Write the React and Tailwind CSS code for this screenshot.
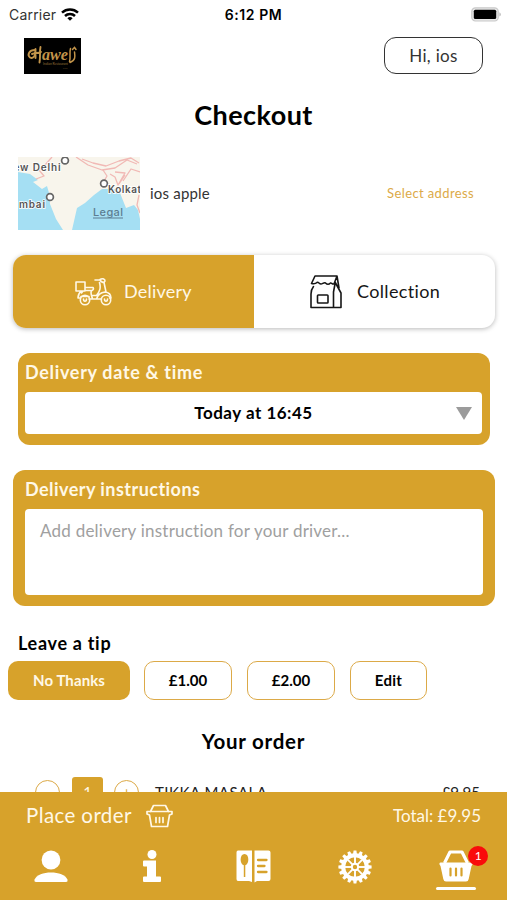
import React from "react";

const TEETH = Array.from({ length: 16 }, (_, i) => i * 22.5);
const SPOKES = Array.from({ length: 8 }, (_, i) => i * 45);

function Wifi() {
  return (
    <svg width="18" height="13" viewBox="0 0 18 13" fill="none" stroke="#000" strokeWidth="2.5">
      <path d="M1 4.6C5.6 .4 12.4 .4 17 4.6" />
      <path d="M4 8C6.8 5.3 11.2 5.3 14 8" />
      <path d="M9 12.8 6.4 10.2C7.8 8.7 10.2 8.7 11.6 10.2Z" fill="#000" stroke="none" />
    </svg>
  );
}

function Battery() {
  return (
    <svg width="31" height="15" viewBox="0 0 31 15">
      <rect x=".8" y=".8" width="26.4" height="13.2" rx="3.6" fill="#e8e8e8" stroke="#c9c9c9" strokeWidth="1.200" />
      <rect x="2.8" y="2.7" width="22.4" height="9.4" rx="1.500" fill="#000" />
      <path d="M28.4 5.2c2 .8 2 3.6 0 4.4z" fill="#bdbdbd" />
    </svg>
  );
}

function Logo() {
  return (
    <svg width="57" height="36" viewBox="0 0 57 36">
      <rect width="57" height="36" fill="#000" />
      <g fill="none" stroke="#c2944a" strokeLinecap="round">
        <path d="M11 12C5 12 3 17 6 19.500C9 21 11.500 18 11 14.500" strokeWidth="1.900" />
        <path d="M11.500 11V20M8 16C12 14.500 14 15.500 17 14M16.500 9C15.500 13 16.500 19 15.500 24.500" strokeWidth="1.900" />
        <path d="M46.500 10.500C45 15 47 20 45.500 23.500M50.500 14C51 18 52 22 46 24.500M48.500 11.500L50.500 9.500L52 11.500" strokeWidth="1.500" />
      </g>
      <text x="18" y="21.500" fill="#c2944a" fontFamily="Liberation Serif, serif" fontStyle="italic" fontWeight="700" fontSize="17" textLength="26" lengthAdjust="spacingAndGlyphs">awe</text>
      <text x="19" y="27" fill="#8f6d35" fontFamily="Lato, sans-serif" fontSize="3.4" textLength="25">Indian Restaurant</text>
      <text x="39" y="30.500" fill="#5c4724" fontFamily="Lato, sans-serif" fontSize="2.5">cafe</text>
    </svg>
  );
}

function MapThumb() {
  return (
    <svg width="122" height="73" viewBox="0 0 122 73">
      <rect width="122" height="73" fill="#f8f5ec" />
      <path d="M0 15L12 17L20 23L15 25L24 32L29 29L31 36L32 47L38 62L45 73H0ZM54 73L59 51L67 46L76 38L84 32H96L102 36L108 51L116 48L120 53L122 62V73Z" fill="#a5dff3" />
      <g fill="none" stroke="#f1b9b5" strokeWidth="1.300" strokeLinejoin="round">
        <path d="M34 0L27 8L21 13L26 19L18 22M58 0L70 8L84 13L97 11L109 3L119 7M64 2L75 6L88 9L101 4L113 1L121 6M85 13L89 19L86 24M97 15L107 16L100 28L97 20L92 17M105 24L113 12L122 15M107 18L101 27M121 38L119 48L122 56" />
      </g>
      <g fill="#fff" stroke="#666" strokeWidth="1.700">
        <circle cx="47" cy="3.500" r="3.400" />
        <circle cx="86" cy="26.500" r="3.400" />
        <circle cx="32" cy="40" r="3.400" />
      </g>
      <g fontFamily="Inter, sans-serif" fontSize="10" fontWeight="600" fill="#555" stroke="#fff" strokeWidth="1.600" paintOrder="stroke">
        <text x="-4.500" y="13.500" textLength="47">ew Delhi</text>
        <text x="90" y="36" textLength="33">Kolkat</text>
        <text x="1" y="50.500" textLength="26">mbai</text>
      </g>
      <text x="75" y="59" fontFamily="Inter, sans-serif" fontSize="11" fontWeight="500" fill="#5c7d92" textLength="30">Legal</text>
      <path d="M75 61H105" stroke="#5c7d92" strokeWidth="1" />
    </svg>
  );
}

function Scooter() {
  return (
    <svg width="37" height="28" viewBox="0 0 37 28" fill="none" stroke="#fff8e6" strokeWidth="1.600" strokeLinejoin="round" strokeLinecap="round">
      <path d="M1 4H10V13H1ZM11 9.500H18C19 11 18 12 17 12.500H10M6 13C4 15 3 17 3 20H5.500M8 13L6.500 15M16.500 12.500C15 16 17 18 17.500 21H14M17.500 21H26M20 2H25.500M25 1.500C28 0 30 1 30 3C29 5.500 25.500 4 25 1.500M24.500 4.500C26 10 25 13 21.500 17.500H17M29 4.500L31 14M21.500 21C23 16 26 14.500 30 14C34 14.500 36 17 36 20H34.500" />
      <circle cx="10" cy="22" r="4.700" /><circle cx="31" cy="22" r="4.700" />
      <path d="M8.500 21C8.500 24 11.500 24 11.500 21M29.500 21C29.500 24 32.500 24 32.500 21M6 18.500H14" />
    </svg>
  );
}

function Bag() {
  return (
    <svg width="32" height="34" viewBox="0 0 32 34" fill="none" stroke="#161616" strokeWidth="1.600" strokeLinejoin="round" strokeLinecap="round">
      <path d="M5 1H27L24 9C22 9.500 21.500 7.500 20.500 8C19 9.500 17 9.500 15.500 8C14 7 12.500 9 11 9C9 9 8.500 6.500 7 7.500C5.500 9 4 9 1.500 8.500ZM3.500 11.500C1.500 14 1 16 1 19V32.500H31V18L25 7M23.500 32.500V17L25 9M27 1L29 13" />
      <rect x="7.500" y="20" width="10.500" height="8" rx=".8" />
    </svg>
  );
}

function BasketOutline() {
  return (
    <svg width="27" height="24" viewBox="0 0 27 24" fill="none" stroke="#fff8e6" strokeWidth="1.700" strokeLinejoin="round" strokeLinecap="round">
      <path d="M4.500 7.500L7.500 1.500H19.500L22.500 7.500M1 7.500H26V10L23.500 11L21.500 22.500H5.500L3.500 11L1 10ZM10 13.500V18.500M13.500 13.500V18.500M17 13.500V18.500" />
    </svg>
  );
}

function Person() {
  return (
    <svg width="34" height="33" viewBox="0 0 34 33" fill="#fff">
      <circle cx="17" cy="10" r="9.400" />
      <path d="M2 32Q0 32 .6 29.500C4 20 30 20 33.400 29.500Q34 32 32 32Z" />
    </svg>
  );
}

function Info() {
  return (
    <svg width="18" height="32" viewBox="0 0 18 32" fill="#fff">
      <circle cx="9" cy="4.500" r="4.500" />
      <path d="M1 10.500H13V26.500H17Q18 26.500 18 27.500V31Q18 32 17 32H1Q0 32 0 31V27.500Q0 26.500 1 26.500H4V16.500H1Q0 16.500 0 15.500V11.500Q0 10.500 1 10.500Z" />
    </svg>
  );
}

function MenuBook() {
  return (
    <svg width="35" height="33" viewBox="0 0 35 33">
      <path d="M2 .5H16V32L13 31H2Q.5 31 .5 29V2.500Q.5 .5 2 .5Z" fill="#fff" />
      <path d="M18.500 .5H32.500Q34.500 .5 34.500 2.500V29Q34.500 31 32.500 31H21L18.500 32.500Z" fill="#fff" />
      <path d="M8.500 4C3.500 4 3.500 14 7.800 15.300V27H9.300V15.300C13.500 14 13.500 4 8.500 4Z" fill="#d7a22b" />
      <path d="M22 10H30.500M22 16H28.500M22 22H30.500" stroke="#d7a22b" strokeWidth="2.300" strokeLinecap="round" />
    </svg>
  );
}

function Gear() {
  return (
    <svg width="34" height="34" viewBox="-17 -17 34 34" fill="none" stroke="#fff">
      {TEETH.map((a) => (
        <path key={a} d="M-2 -12.500L-1.400 -16.600H1.400L2 -12.500Z" fill="#fff" stroke="none" transform={`rotate(${a})`} />
      ))}
      <circle r="11.800" strokeWidth="4" />
      {SPOKES.map((a) => (
        <path key={a} d="M0 -3V-10" strokeWidth="1.900" transform={`rotate(${a})`} />
      ))}
      <circle r="3.200" strokeWidth="2" />
    </svg>
  );
}

function Basket() {
  return (
    <svg width="34" height="32" viewBox="0 0 34 32">
      <path d="M5.500 13L11 2H23L28.500 13" fill="none" stroke="#fff" strokeWidth="3.200" strokeLinejoin="round" />
      <path d="M1.500 12.500H32.500Q34 12.500 33.500 14.500L32.500 16L29.700 29Q29.200 31.500 27 31.500H7Q4.800 31.500 4.300 29L1.500 16L.5 14.500Q0 12.500 1.500 12.500Z" fill="#fff" />
      <path d="M11.500 18.500V25.500M17 18.500V25.500M22.500 18.500V25.500" stroke="#d7a22b" strokeWidth="2.200" strokeLinecap="round" />
    </svg>
  );
}

export default function App() {
  return (
    <div className="flex h-[900px] w-[507px] flex-col overflow-hidden bg-white font-['Lato',sans-serif] text-black [font-variant-ligatures:none]">
      <main className="min-h-0 flex-1 overflow-hidden whitespace-nowrap">
        <div className="grid h-7 grid-cols-[1fr_auto_1fr] items-center px-[5px] font-['Inter',sans-serif]">
          <div className="flex items-center gap-[5px] pl-[4px]">
            <span className="text-[14px] tracking-[0.2px] text-[#333]">Carrier</span>
            <Wifi />
          </div>
          <span className="text-[14px] font-semibold tracking-[0.6px]">6:12 PM</span>
          <div className="flex justify-end"><Battery /></div>
        </div>

        <header className="mt-[9px] flex h-[37px] items-center justify-between px-[24px]">
          <Logo />
          <button className="h-[37px] w-[99px] rounded-[12px] border-[1.500px] border-[#333] text-[17px] tracking-[0.3px] text-[#333]">Hi, ios</button>
        </header>

        <h1 className="mt-[22px] text-center text-[27px] font-bold leading-[38px] tracking-[0.45px]">Checkout</h1>

        <div className="mt-[23px] flex h-[73px] items-center pl-[18px] pr-[33px]">
          <MapThumb />
          <span className="ml-[10px] text-[15px] tracking-[0.2px] text-[#333]">ios apple</span>
          <span className="ml-auto text-[13px] tracking-[0.38px] text-[#dcaa48]">Select address</span>
        </div>

        <div className="ml-[13px] mr-[12px] mt-[25px] flex h-[73px] rounded-[13px] shadow-[0_1px_5px_rgba(0,0,0,0.28)]">
          <div className="flex w-[241px] items-center rounded-l-[13px] bg-[#d7a22b] pl-[62px] text-[18px] tracking-[0.2px] text-[#fff8e6]">
            <Scooter />
            <span className="ml-[12px]">Delivery</span>
          </div>
          <div className="flex flex-1 items-center pl-[56px] text-[18px] tracking-[0.35px] text-[#161616]">
            <Bag />
            <span className="ml-[15px]">Collection</span>
          </div>
        </div>

        <section className="ml-[18px] mt-[25px] h-[92px] w-[472px] rounded-[12px] bg-[#d7a22b] pl-[7px] pr-[8px]">
          <h2 className="h-[39px] text-[18px] font-bold leading-[38px] tracking-[0.68px] text-[#fff8e6]">Delivery date &amp; time</h2>
          <div className="grid h-[42px] grid-cols-[1fr_auto_1fr] items-center rounded-[4px] bg-white">
            <span className="col-start-2 text-[17px] font-bold leading-[24px] tracking-[0.5px]">Today at 16:45</span>
            <svg className="mr-[10px] justify-self-end" width="16" height="13" viewBox="0 0 16 13"><path d="M0 0H16L8 13Z" fill="#9b9b9b" /></svg>
          </div>
        </section>

        <section className="ml-[13px] mt-[25px] h-[136px] w-[482px] rounded-[12px] bg-[#d7a22b] px-[12px]">
          <h2 className="h-[39px] text-[18px] font-bold leading-[38px] tracking-[0.46px] text-[#fff8e6]">Delivery instructions</h2>
          <div className="h-[86px] rounded-[4px] bg-white pl-[15px] pt-[9px] text-[17px] leading-[26px] tracking-[0.23px] text-[#a0a0a0]">Add delivery instruction for your driver...</div>
        </section>

        <h2 className="ml-[18px] mt-[24px] text-[18px] font-bold leading-[26px] tracking-[0.7px]">Leave a tip</h2>
        <div className="ml-[8px] mt-[5px] flex h-[39px] text-[15px] font-bold">
          <button className="w-[122px] rounded-[10px] bg-[#d7a22b] tracking-[0.1px] text-[#fff8e6]">No Thanks</button>
          <button className="ml-[14px] w-[88px] rounded-[10px] border-[1.500px] border-[#dcaa48]">£1.00</button>
          <button className="ml-[15px] w-[88px] rounded-[10px] border-[1.500px] border-[#dcaa48]">£2.00</button>
          <button className="ml-[15px] w-[77px] rounded-[10px] border-[1.500px] border-[#dcaa48] tracking-[0.3px]">Edit</button>
        </div>

        <h2 className="mt-[26px] text-center text-[20.500px] font-bold leading-[30px] tracking-[0.75px]">Your order</h2>
        <div className="mt-[21px] flex h-[30px] items-center pl-[35px] pr-[27px] text-[15px] text-[#222]">
          <span className="flex h-[25px] w-[25px] items-center justify-center rounded-full border border-[#dcaa48] text-[#dcaa48]">−</span>
          <span className="ml-[12px] flex h-[30px] w-[31px] items-center justify-center rounded-[3px] bg-[#d7a22b] text-[#fff8e6]">1</span>
          <span className="ml-[11px] flex h-[25px] w-[25px] items-center justify-center rounded-full border border-[#dcaa48] text-[#dcaa48]">+</span>
          <span className="ml-[16px] tracking-[0.5px]">TIKKA MASALA</span>
          <span className="ml-auto">£9.95</span>
        </div>
      </main>

      <footer className="h-[108px] shrink-0 whitespace-nowrap bg-[#d7a22b]">
        <div className="flex h-[47px] items-center px-[26px] text-[#fff8e6]">
          <span className="text-[20.500px] tracking-[0.4px]">Place order</span>
          <span className="ml-[14px]"><BasketOutline /></span>
          <span className="ml-auto text-[17px]">Total: £9.95</span>
        </div>
        <nav className="grid h-[61px] grid-cols-5 justify-items-center pt-[11px]">
          <Person />
          <Info />
          <MenuBook />
          <Gear />
          <div className="relative flex h-[41px] flex-col items-center">
            <Basket />
            <span className="mt-[5px] h-[3px] w-[40px] rounded-full bg-white" />
            <span className="absolute -top-[4px] left-[32px] flex h-[20px] w-[20px] items-center justify-center rounded-full bg-[#f90b0b] text-[12px] text-white">1</span>
          </div>
        </nav>
      </footer>
    </div>
  );
}
